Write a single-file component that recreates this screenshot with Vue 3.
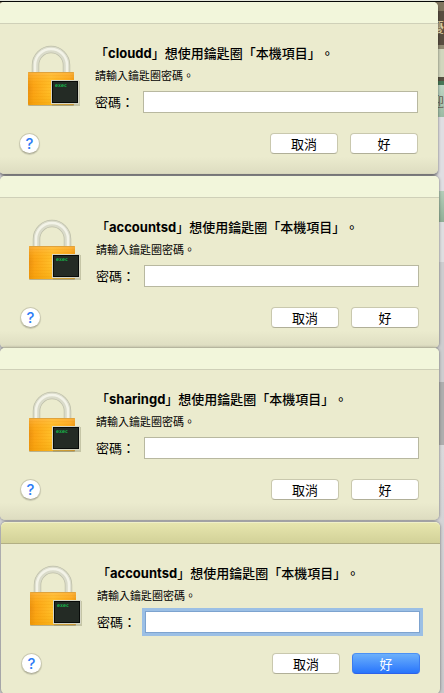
<template>
  <main class="desktop">
    <div class="backdrop" aria-hidden="true">
      <div class="strip strip-frame"></div>
      <div class="strip strip-banner"><span>擾</span></div>
      <div class="strip strip-edge"></div>
      <div class="strip strip-pale"></div>
      <div class="strip strip-line"></div>
      <div class="strip strip-menu"><span>迎</span></div>
      <div class="strip strip-page"></div>
      <div class="strip strip-tab"></div>
      <div class="strip strip-light"></div>
      <div class="strip strip-grey"></div>
      <div class="strip strip-thumb"></div>
      <div class="strip strip-rest"></div>
    </div>

    <form
      v-for="dialog in dialogs"
      :key="dialog.id"
      class="dialog"
      :class="[dialog.place, { active: dialog.active }]"
      @submit.prevent
    >
      <header class="titlebar"></header>
      <div class="content">
        <svg class="lock" viewBox="0 0 54 64" width="54" height="64" aria-hidden="true">
          <defs>
            <linearGradient :id="`body-${dialog.id}`" x1="0" y1="0" x2="1" y2="0">
              <stop offset="0" stop-color="#e98f10" />
              <stop offset="0.12" stop-color="#fba316" />
              <stop offset="0.5" stop-color="#ffc02a" />
              <stop offset="0.9" stop-color="#fba318" />
              <stop offset="1" stop-color="#e68f10" />
            </linearGradient>
            <linearGradient :id="`shade-${dialog.id}`" x1="0" y1="0" x2="0" y2="1">
              <stop offset="0" stop-color="#ffbe5a" stop-opacity="0.6" />
              <stop offset="0.5" stop-color="#ffb000" stop-opacity="0" />
              <stop offset="1" stop-color="#eb9c00" stop-opacity="0.4" />
            </linearGradient>
          </defs>
          <path d="M9.500 28V20a15.500 15.500 0 0 1 31 0v8" fill="none" stroke="#bebfa9" stroke-width="7.500" />
          <path d="M9.500 28V20a15.500 15.500 0 0 1 31 0v8" fill="none" stroke="#dadbca" stroke-width="6" />
          <path d="M9 28V20a16 16 0 0 1 32 0v8" fill="none" stroke="#f3f3e8" stroke-width="2.500" />
          <rect x="2" y="59" width="46" height="2" rx="1" fill="#b9b18d" />
          <rect x="2" y="27" width="46" height="33" rx="1" :fill="`url(#body-${dialog.id})`" />
          <rect x="2" y="27" width="46" height="33" rx="1" :fill="`url(#shade-${dialog.id})`" />
          <path
            d="M2 30.500h46M2 33.500h46M2 36.500h46M2 39.500h46M2 42.500h46M2 45.500h46M2 48.500h46M2 51.500h46M2 54.500h46M2 57.500h46"
            stroke="#e88d00"
            stroke-opacity="0.12"
          />
          <path d="M2.500 27.500h45" stroke="#dfa23c" />
          <rect x="26" y="36" width="28" height="25" fill="#8d8b6c" opacity="0.4" />
          <rect x="25" y="35" width="28" height="24" fill="#d6d6c4" />
          <rect x="26" y="36" width="26" height="22" fill="#080b09" />
          <rect x="27" y="37" width="24" height="20" fill="#242b25" />
          <text x="29" y="42" class="exec">exec</text>
        </svg>

        <div class="details">
          <h1 class="title">「<strong>{{ dialog.process }}</strong>」想使用鑰匙圈「本機項目」。</h1>
          <p class="hint">請輸入鑰匙圈密碼。</p>
          <div class="field">
            <label :for="`password-${dialog.id}`">密碼：</label>
            <input :id="`password-${dialog.id}`" v-model="dialog.password" type="password" />
          </div>
        </div>

        <div class="actions">
          <button type="button" class="help" aria-label="輔助說明">?</button>
          <button type="button" class="push">取消</button>
          <button type="submit" class="push" :class="{ primary: dialog.active }">好</button>
        </div>
      </div>
    </form>
  </main>
</template>

<script setup>
import { ref } from 'vue'

const dialogs = ref([
  { id: 1, process: 'cloudd', place: 'first', password: '', active: false },
  { id: 2, process: 'accountsd', place: 'second', password: '', active: false },
  { id: 3, process: 'sharingd', place: 'third', password: '', active: false },
  { id: 4, process: 'accountsd', place: 'fourth', password: '', active: true }
])
</script>

<style>
body {
  margin: 0;
}
</style>

<style scoped>
.desktop {
  position: relative;
  box-sizing: border-box;
  height: 100vh;
  padding-top: 2px;
  overflow: hidden;
  background: #aaa9ad;
  font-family: Inter, "Noto Sans CJK TC", sans-serif;
  color: #000;
  text-spacing-trim: space-all;
}

.backdrop {
  position: absolute;
  inset: 0;
  display: flex;
  flex-direction: column;
  border-top: 1px solid #e4e6dc;
}

.strip {
  flex: none;
  overflow: hidden;
  text-align: right;
  font-size: 13px;
}

.strip-frame {
  height: 9px;
  border-top: 1px solid #080a08;
  background: #81765f;
}

.strip-banner {
  height: 34px;
  background: #584d40;
  color: #e8dcae;
  line-height: 32px;
}

.strip-edge {
  height: 4px;
  background: #918a73;
}

.strip-pale {
  height: 28px;
  background: #d1d6bd;
}

.strip-line {
  height: 4px;
  background: #554f40;
}

.strip-menu {
  height: 32px;
  border-top: 4px solid #477657;
  background: linear-gradient(#bdd5c4, #9cbba4);
  color: #685d4d;
  line-height: 32px;
}

.strip-page {
  height: 74px;
  background: #dfdee2;
}

.strip-tab {
  height: 31px;
  background: linear-gradient(#b4cdb9, #91b097);
}

.strip-light {
  height: 40px;
  background: #dedee0;
}

.strip-grey {
  height: 120px;
  background: #cdcdcf;
}

.strip-thumb {
  height: 63px;
  background: #aeaeae;
}

.strip-rest {
  flex: 1;
  background: linear-gradient(#d9d9db, #c9c9cc);
}

.dialog {
  position: relative;
  margin: 0 5px 0 0;
  border-radius: 5px;
  background: linear-gradient(#ebebce 90%, #dddcc0);
  box-shadow: 0 0 3px rgba(0, 0, 0, 0.5);
}

.first {
  margin: 0 6px 2px -1px;
  box-shadow: 0 2px 3px rgba(0, 0, 0, 0.5);
}

.third {
  margin-bottom: 2px;
}

.fourth {
  margin: 0 4px 0 1px;
}

.titlebar {
  box-sizing: border-box;
  height: 22px;
  border-bottom: 1px solid #cfd0b8;
  border-radius: 5px 5px 0 0;
  background: #f2f6db;
}

.active {
  background: #ebebce;
}

.active .titlebar {
  border-top: 1px solid #f0f0c8;
  border-bottom-color: #b2af84;
  background: linear-gradient(#e7e6ae, #d2d198);
}

.content {
  display: grid;
  grid-template-columns: 76px 1fr;
  padding: 20px 20px;
}

.lock {
  margin: 1px 0 0 7px;
  height: 64px;
}

.exec {
  fill: #17b64b;
  font-family: "DejaVu Sans Mono", monospace;
  font-size: 5px;
  font-weight: bold;
}

.title {
  margin: 0;
  font-size: 13px;
  font-weight: 500;
  line-height: 18px;
  white-space: nowrap;
  font-feature-settings: "chws" 0;
}

.title strong {
  font-weight: 700;
}

.hint {
  margin: 6px 0 7px;
  font-size: 11px;
  line-height: 16px;
}

.field {
  display: flex;
  align-items: center;
}

.field label {
  flex: none;
  width: 48px;
  font-size: 13px;
  line-height: 22px;
}

.field input {
  box-sizing: border-box;
  flex: 1;
  min-width: 0;
  height: 22px;
  padding: 0 4px;
  border: 1px solid #b8b8a0;
  border-radius: 0;
  outline: none;
  background: #fff;
  font-size: 13px;
}

.active .field input,
.field input:focus {
  border-color: #7da3cf;
  box-shadow: 0 0 0 3px #9bbfe5;
}

.actions {
  grid-column: 1 / -1;
  display: flex;
  gap: 12px;
  margin-top: 20px;
}

button {
  box-sizing: border-box;
  height: 21px;
  padding: 0;
  border: 1px solid #c9c8ae;
  border-bottom-color: #b0af98;
  background: #fff;
  color: #000;
  font-family: inherit;
  font-size: 13px;
  line-height: 18px;
}

.push {
  width: 68px;
  border-radius: 4px;
}

.help {
  width: 21px;
  margin-right: auto;
  border-radius: 50%;
  box-shadow: 0 1px 1px rgba(0, 0, 0, 0.15);
  color: #2d7cf6;
  font-size: 15px;
  font-weight: 500;
}

.primary {
  border-color: #4b91f5 #3b7cf0 #2d62e8;
  background: linear-gradient(#6cb0fb, #2875fc);
  color: #fff;
}
</style>
